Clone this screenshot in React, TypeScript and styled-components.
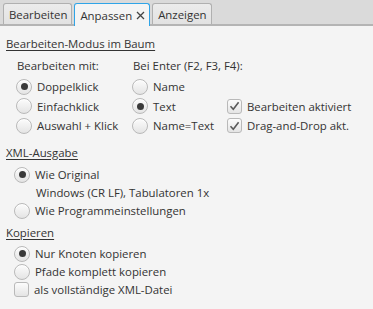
import React, { useState } from 'react';
import styled, { createGlobalStyle } from 'styled-components';

const GlobalStyle = createGlobalStyle`
    html, body {
        margin: 0;
        padding: 0;
        background: #f4f4f4;
    }
    body {
        font-family: "Open Sans", "Noto Sans", "Liberation Sans", sans-serif;
        font-size: 11.4px;
        color: #333333;
    }
`;

const Window = styled.div`
    width: 373px;
    height: 309px;
    background: #f4f4f4;
    overflow: hidden;
    display: flex;
    flex-direction: column;
`;

const TabHeader = styled.div`
    height: 24px;
    background: #dadada;
    border-bottom: 2px solid #b4b4b4;
    display: flex;
    align-items: flex-end;
    gap: 2px;
    padding-left: 3px;
`;

const Tab = styled.div<{ $active?: boolean }>`
    height: ${({ $active }) => ($active ? '23px' : '21px')};
    box-sizing: border-box;
    display: flex;
    align-items: center;
    gap: 4px;
    padding: 0 4px 0 5px;
    border: 1px solid ${({ $active }) => ($active ? '#2fa4e7' : '#b0b0b0')};
    border-bottom: none;
    border-radius: 3px 3px 0 0;
    background: ${({ $active }) => ($active ? '#f4f4f4' : 'linear-gradient(#ececec, #e2e2e2)')};
    margin-bottom: ${({ $active }) => ($active ? '-2px' : '0')};
    color: #333;
    cursor: default;
`;

const Content = styled.div`
    padding: 9px 6px 0 6px;
    display: flex;
    flex-direction: column;
`;

const Heading = styled.div<{ $gap?: number }>`
    text-decoration: underline;
    text-underline-offset: 2px;
    height: 18px;
    line-height: 18px;
    white-space: nowrap;
    margin-top: ${({ $gap }) => $gap ?? 0}px;
`;

const Grid = styled.div`
    display: grid;
    grid-template-columns: 116px 95px auto;
    grid-template-rows: 22px 19.5px 19.5px 19.5px;
    padding-left: 10px;
    margin-top: 2px;
`;

const Label = styled.div`
    display: flex;
    align-items: flex-start;
    line-height: 22px;
    padding-left: 1px;
    white-space: nowrap;
`;

const List = styled.div<{ $gap: number }>`
    display: grid;
    grid-auto-rows: 18px;
    padding-left: 8px;
    margin-top: ${({ $gap }) => $gap}px;
`;

const Option = styled.label`
    display: flex;
    align-items: center;
    gap: 5px;
    white-space: nowrap;
    cursor: default;
`;

const Sub = styled.div`
    padding-left: 22px;
    display: flex;
    align-items: center;
    white-space: nowrap;
`;

const RadioCircle = styled.span<{ $on?: boolean }>`
    width: 16px;
    height: 16px;
    box-sizing: border-box;
    border-radius: 50%;
    border: 1px solid #b9b9b9;
    background: linear-gradient(#fcfcfc, #e4e4e4);
    box-shadow: inset 0 1px 0 #ffffff;
    display: flex;
    align-items: center;
    justify-content: center;
    flex-shrink: 0;

    &::after {
        content: '';
        display: ${({ $on }) => ($on ? 'block' : 'none')};
        width: 7px;
        height: 7px;
        border-radius: 50%;
        background: #3a3a3a;
    }
`;

const Box = styled.span`
    width: 15px;
    height: 15px;
    box-sizing: border-box;
    border-radius: 3px;
    border: 1px solid #b9b9b9;
    background: linear-gradient(#fcfcfc, #e4e4e4);
    display: flex;
    align-items: center;
    justify-content: center;
    flex-shrink: 0;
`;

const Radio = ({ on, children }: { on?: boolean; children: React.ReactNode }) => (
    <Option>
        <RadioCircle $on={on} />
        <span>{children}</span>
    </Option>
);

const Check = ({ on, children }: { on?: boolean; children: React.ReactNode }) => (
    <Option>
        <Box>
            {on && (
                <svg width="11" height="10" viewBox="0 0 11 10">
                    <path d="M1.5 5.2 L4.3 8.2 L9.6 1.2" fill="none" stroke="#5a5a5a" strokeWidth="1.6" />
                </svg>
            )}
        </Box>
        <span>{children}</span>
    </Option>
);

const CloseIcon = () => (
    <svg width="9" height="9" viewBox="0 0 9 9">
        <path d="M1 1 L8 8 M8 1 L1 8" stroke="#444" strokeWidth="1.3" fill="none" />
    </svg>
);

const App: React.FC = () => {
    const [tab] = useState('Anpassen');

    return (
        <Window>
            <GlobalStyle />
            <TabHeader>
                <Tab>Bearbeiten</Tab>
                <Tab $active={tab === 'Anpassen'}>
                    Anpassen <CloseIcon />
                </Tab>
                <Tab>Anzeigen</Tab>
            </TabHeader>
            <Content>
                <Heading>Bearbeiten-Modus im Baum</Heading>
                <Grid>
                    <Label>Bearbeiten mit:</Label>
                    <Label>Bei Enter (F2, F3, F4):</Label>
                    <div />
                    <Radio on>Doppelklick</Radio>
                    <Radio>Name</Radio>
                    <div />
                    <Radio>Einfachklick</Radio>
                    <Radio on>Text</Radio>
                    <Check on>Bearbeiten aktiviert</Check>
                    <Radio>Auswahl + Klick</Radio>
                    <Radio>Name=Text</Radio>
                    <Check on>Drag-and-Drop akt.</Check>
                </Grid>

                <Heading $gap={8}>XML-Ausgabe</Heading>
                <List $gap={4}>
                    <Radio on>Wie Original</Radio>
                    <Sub>Windows (CR LF), Tabulatoren 1x</Sub>
                    <Radio>Wie Programmeinstellungen</Radio>
                </List>

                <Heading $gap={4}>Kopieren</Heading>
                <List $gap={3}>
                    <Radio on>Nur Knoten kopieren</Radio>
                    <Radio>Pfade komplett kopieren</Radio>
                    <Check>als vollständige XML-Datei</Check>
                </List>
            </Content>
        </Window>
    );
};

export default App;
